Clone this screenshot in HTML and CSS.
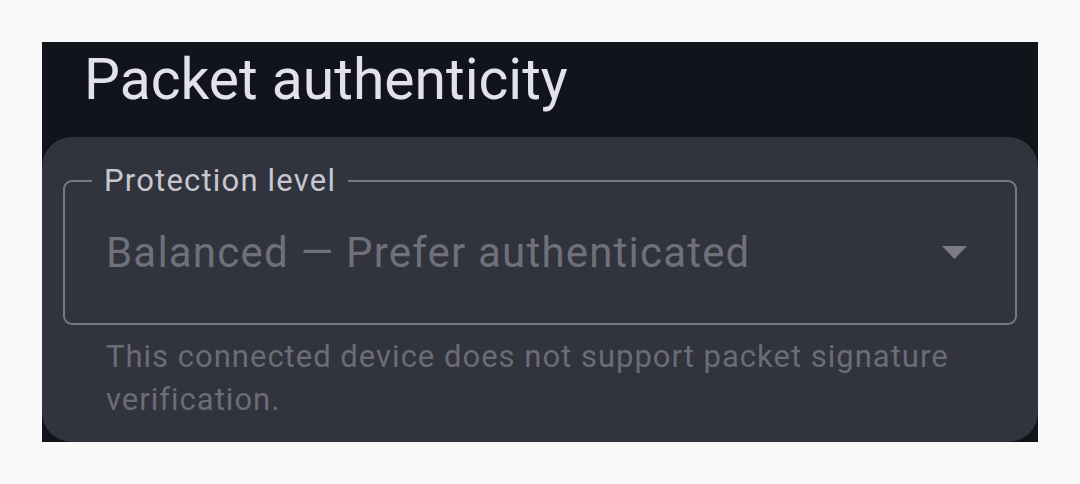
FILE: index.html
```html
<!DOCTYPE html>
<html lang="en">
<head>
    <meta charset="UTF-8">
    <title>Packet authenticity</title>
    <meta name="viewport" content="width=device-width, initial-scale=1.0">
    <link rel="stylesheet" href="styles.css">
</head>
<body>
    <div class="screen">
        <h1 class="section-title">Packet authenticity</h1>
        <div class="card">
            <div class="field">
                <span class="field-label">Protection level</span>
                <span class="field-value">Balanced — Prefer authenticated</span>
                <!-- dropdown arrow -->
                <svg class="field-arrow" width="25" height="13" viewBox="0 0 25 13">
                    <polygon points="0,0 25,0 12.5,13" fill="#7b7c86"/>
                </svg>
            </div>
            <div class="field-help">
                This connected device does not support packet signature verification.
            </div>
        </div>
    </div>
</body>
</html>
```

FILE: styles.css
```css
body {
    margin: 0;
    padding: 42px;
    background: #f9f9f9;
    font-family: Roboto, "Noto Sans", sans-serif;
}
.screen {
    width: 996px;
    height: 400px;
    background: #12141b;
    overflow: hidden;
}
.section-title {
    margin: 0;
    padding: 4px 42px 23px;
    font-size: 57px;
    font-weight: 400;
    line-height: 68px;
    color: #e3e2ec;
}
.card {
    background: #31333d;
    border-radius: 30px;
    padding: 43px 21px 30px;
    height: 305px;
    box-sizing: border-box;
}
.field {
    position: relative;
    height: 145px;
    box-sizing: border-box;
    border: 2px solid #777882;
    border-radius: 9px;
    display: flex;
    align-items: center;
    justify-content: space-between;
    padding: 0 48px 0 41px;
}
.field-label {
    position: absolute;
    left: 27px;
    top: -20px;
    padding: 0 12px;
    background: #31333d;
    font-size: 31px;
    line-height: 38px;
    letter-spacing: 1.2px;
    color: #c7c7d1;
}
.field-value {
    font-size: 42px;
    letter-spacing: 1.2px;
    color: #6f707a;
}
.field-help {
    padding: 10px 43px 0;
    font-size: 31px;
    line-height: 43px;
    letter-spacing: 1px;
    color: #6b6c76;
}
```
